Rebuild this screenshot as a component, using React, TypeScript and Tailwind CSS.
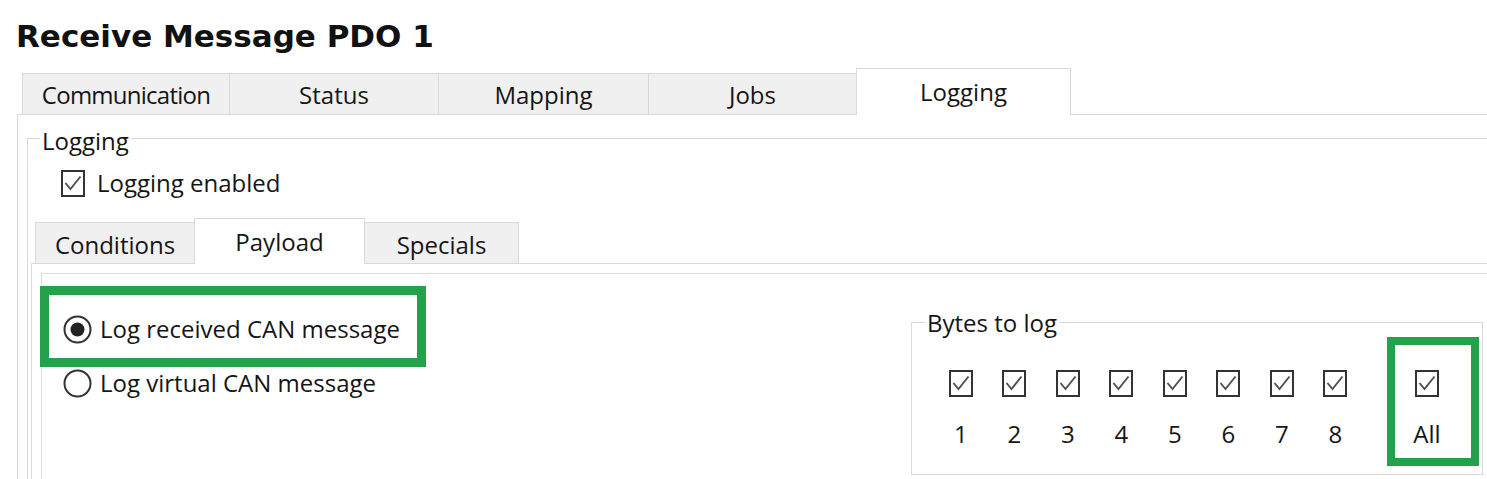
import React from 'react'

const mainTabs = [
  { name: 'Communication', w: 'w-[207px] tracking-[-0.75px]' },
  { name: 'Status', w: 'w-[209px]' },
  { name: 'Mapping', w: 'w-[210px]' },
  { name: 'Jobs', w: 'w-[208px]' },
]

const bytes = ['1', '2', '3', '4', '5', '6', '7', '8']

function CheckBox() {
  return (
    <svg width="24" height="27" viewBox="0 0 24 27" className="shrink-0">
      <rect x="1" y="1" width="22" height="25" fill="white" stroke="#333" strokeWidth="2" />
      <polyline points="4.5,13 9.5,19 19.5,6.5" fill="none" stroke="#505050" strokeWidth="1.9" />
    </svg>
  )
}

function Radio({ checked }: { checked?: boolean }) {
  return (
    <svg width="29" height="29" viewBox="0 0 29 29" className="shrink-0">
      <circle cx="14.5" cy="14.5" r="13" fill="white" stroke="#333" strokeWidth="2" />
      {checked && <circle cx="14.5" cy="14.5" r="7" fill="#222" />}
    </svg>
  )
}

function ByteColumn({ label }: { label: string }) {
  return (
    <div className="w-[53.5px] flex flex-col items-center">
      <CheckBox />
      <span className="mt-[22px] leading-[30px]">{label}</span>
    </div>
  )
}

export default function App() {
  return (
    <div className="w-[1487px] h-[479px] overflow-hidden bg-white text-[#151515] text-[24px] font-['Open_Sans',sans-serif]">
      <div className="h-[68px] pt-[16px] pl-[16px] text-[31px] leading-[40px] font-bold text-[#111] font-['DejaVu_Sans',sans-serif]">
        Receive Message PDO 1
      </div>

      <div className="pl-[17px]">
        {/* main tab strip */}
        <div className="flex items-end h-[47px]">
          <div className="w-[5px] h-px bg-[#d9d9d9]" />
          {mainTabs.map((t) => (
            <div
              key={t.name}
              className={`${t.w} h-[42px] flex items-center justify-center pt-[2px] bg-[#f0f0f0] border-l border-t border-b border-[#d9d9d9]`}
            >
              {t.name}
            </div>
          ))}
          <div className="w-[215px] h-[47px] flex items-center justify-center bg-white border-l border-t border-r border-[#d9d9d9]">
            Logging
          </div>
          <div className="flex-1 h-px bg-[#d9d9d9]" />
        </div>

        {/* main panel */}
        <div className="h-[364px] border-l border-[#d9d9d9] pl-[9px] pt-[23px]">
          <div className="h-[400px] border-l border-t border-[#d9d9d9] flex flex-col items-start">
            <span className="-mt-[13px] ml-[12px] px-[2px] bg-white leading-[30px]">Logging</span>

            <div className="mt-[12px] ml-[33px] h-[30px] flex items-center gap-[12px] leading-[30px]">
              <CheckBox />
              <span>Logging enabled</span>
            </div>

            {/* inner tab control */}
            <div className="mt-[20px] ml-[3px] self-stretch">
              <div className="flex items-end h-[46px]">
                <div className="w-[4px] h-px bg-[#d9d9d9]" />
                <div className="w-[159px] h-[42px] flex items-center justify-center pt-[3px] bg-[#f0f0f0] border-l border-t border-b border-[#d9d9d9]">
                  Conditions
                </div>
                <div className="w-[171px] h-[46px] flex items-center justify-center bg-white border-l border-t border-r border-[#d9d9d9]">
                  Payload
                </div>
                <div className="w-[154px] h-[42px] flex items-center justify-center pt-[4px] bg-[#f0f0f0] border-t border-r border-b border-[#d9d9d9]">
                  Specials
                </div>
                <div className="flex-1 h-px bg-[#d9d9d9]" />
              </div>

              <div className="h-[300px] border-l border-[#d9d9d9] pl-[9px] pt-[9px]">
                <div className="h-[300px] border-l border-t border-[#dedede] flex items-start">
                  {/* radio column */}
                  <div className="w-[869px] flex flex-col items-start">
                    <div className="-ml-[2px] mt-[12px] w-[386px] h-[81px] border-[9px] border-[#23a24b] pt-[19px] pl-[14px]">
                      <div className="h-[30px] flex items-center gap-[8px] leading-[30px]">
                        <Radio checked />
                        <span>Log received CAN message</span>
                      </div>
                    </div>
                    <div className="mt-[1px] ml-[21px] h-[30px] flex items-center gap-[8px] leading-[30px]">
                      <Radio />
                      <span>Log virtual CAN message</span>
                    </div>
                  </div>

                  {/* bytes to log */}
                  <div className="mt-[48px] w-[572px] h-[153px] border border-[#d9d9d9] flex flex-col items-start">
                    <span className="-mt-[15px] ml-[13px] px-[2px] bg-white leading-[30px]">Bytes to log</span>
                    <div className="flex items-start">
                      <div className="pl-[22px] pt-[32px] flex">
                        {bytes.map((b) => (
                          <ByteColumn key={b} label={b} />
                        ))}
                      </div>
                      <div className="ml-[25px] -mt-[1px] w-[92px] h-[129px] border-[8px] border-[#23a24b] pl-[5px] pt-[25px]">
                        <div className="w-[54px] flex flex-col items-center">
                          <CheckBox />
                          <span className="mt-[22px] leading-[30px]">All</span>
                        </div>
                      </div>
                    </div>
                  </div>
                </div>
              </div>
            </div>
          </div>
        </div>
      </div>
    </div>
  )
}
